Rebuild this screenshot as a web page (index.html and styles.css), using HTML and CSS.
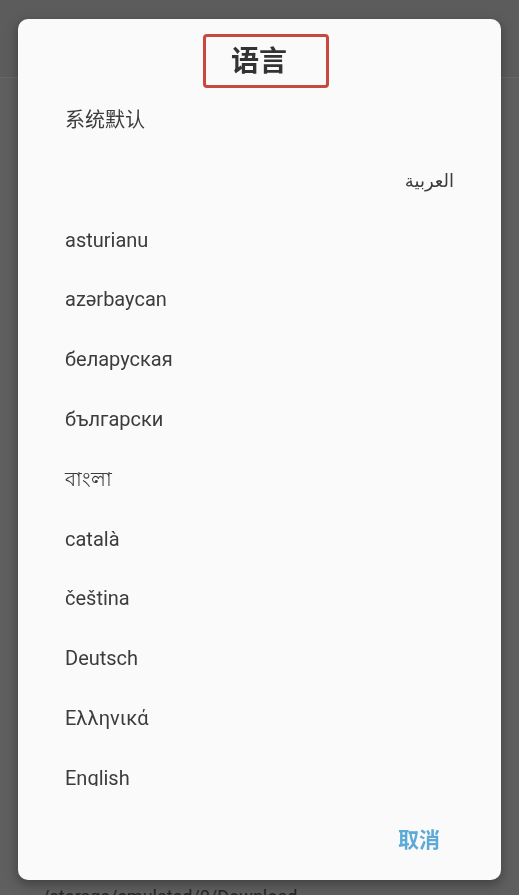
FILE: index.html
```html
<!DOCTYPE html>
<html lang="zh-CN">
<head>
    <meta charset="UTF-8">
    <meta name="viewport" content="width=device-width, initial-scale=1.0">
    <title>语言</title>
    <link rel="stylesheet" href="styles.css">
</head>
<body>
    <div class="app">
        <div class="toolbar"></div>
        <div class="content">
            <p class="path">/storage/emulated/0/Download</p>
        </div>
    </div>

    <div class="overlay">
        <div class="dialog">
            <div class="dialog-title">
                <h2 class="title-box">语言</h2>
            </div>
            <ul class="lang-list">
                <li class="zh">系统默认</li>
                <li class="rtl" dir="rtl" lang="ar">العربية</li>
                <li>asturianu</li>
                <li>azərbaycan</li>
                <li>беларуская</li>
                <li>български</li>
                <li lang="bn">বাংলা</li>
                <li>català</li>
                <li>čeština</li>
                <li>Deutsch</li>
                <li>Ελληνικά</li>
                <li>English</li>
            </ul>
            <div class="dialog-actions">
                <button class="cancel-button">取消</button>
            </div>
        </div>
    </div>
</body>
</html>
```

FILE: styles.css
```css
body {
    font-family: Roboto, 'Noto Sans CJK SC', sans-serif;
    margin: 0;
    padding: 0;
    width: 519px;
    height: 895px;
    overflow: hidden;
    background-color: #5f5f5f;
}
.app {
    height: 895px;
    display: flex;
    flex-direction: column;
}
.toolbar {
    height: 77px;
    background-color: #5c5c5c;
    border-bottom: 1px solid #686868;
}
.content {
    flex: 1;
    padding: 0 42px;
    display: flex;
    flex-direction: column;
    justify-content: flex-end;
}
.path {
    margin: 0 0 -12px;
    font-size: 18px;
    color: #262626;
}
.overlay {
    position: fixed;
    inset: 0;
}
.dialog {
    position: absolute;
    left: 18px;
    top: 19px;
    width: 483px;
    height: 861px;
    border-radius: 10px;
    background-color: #fafafa;
    box-shadow: 0 4px 12px rgba(0, 0, 0, 0.35);
    display: flex;
    flex-direction: column;
}
.dialog-title {
    padding: 15px 0 0 185px;
    height: 55px;
}
.title-box {
    display: inline-block;
    box-sizing: border-box;
    width: 126px;
    height: 54px;
    margin: 0;
    padding: 0 0 0 25px;
    border: 3px solid #c8473e;
    border-radius: 4px;
    font-family: 'Noto Sans CJK SC', sans-serif;
    font-size: 28px;
    font-weight: bold;
    line-height: 44px;
    color: #333333;
}
.lang-list {
    list-style-type: none;
    margin: 0;
    padding: 0 47px;
    height: 697px;
    overflow: hidden;
}
.lang-list li {
    box-sizing: border-box;
    height: 59.8px;
    padding-top: 4px;
    line-height: 55.8px;
    font-size: 20px;
    color: #3c3c3c;
    white-space: nowrap;
}
.lang-list .zh {
    padding-top: 0;
    line-height: 59.8px;
    font-family: 'Noto Sans CJK SC', sans-serif;
    font-size: 20px;
}
.lang-list .rtl {
    text-align: right;
    font-family: 'DejaVu Sans', sans-serif;
    font-size: 18px;
}
.dialog-actions {
    flex: 1;
    display: flex;
    justify-content: flex-end;
    align-items: center;
    padding: 10px 52px 0 0;
}
.cancel-button {
    border: none;
    background: none;
    padding: 8px 9px;
    font-family: 'Noto Sans CJK SC', sans-serif;
    font-size: 21px;
    font-weight: bold;
    color: #5ea9d6;
    cursor: pointer;
}
```
